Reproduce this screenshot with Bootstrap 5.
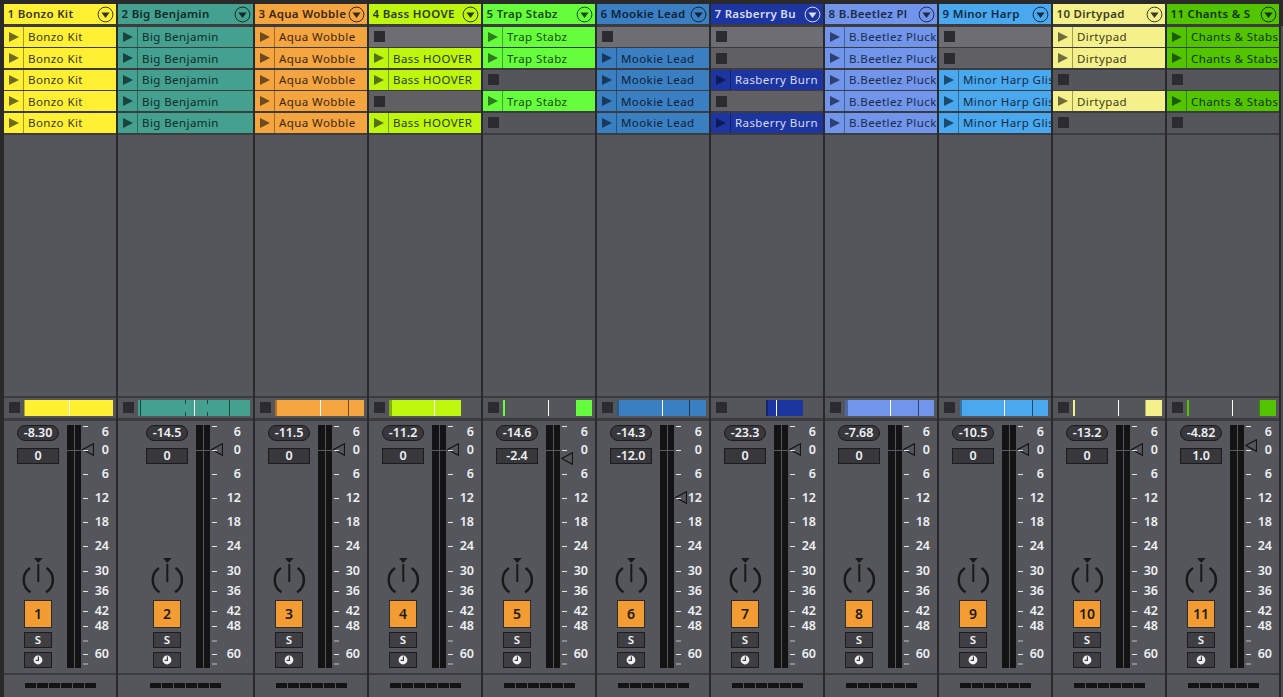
<!DOCTYPE html>
<html lang="en">
<head>
  <meta charset="UTF-8">
  <title>Session mixer</title>
  <meta name="viewport" content="width=device-width, initial-scale=1">
  <link href="https://cdn.jsdelivr.net/npm/bootstrap@5.3.0/dist/css/bootstrap.min.css" rel="stylesheet">
  <style>
    html, body { height: 100%; overflow: hidden; background: #2a2a2b; }
    body { font-family: "Noto Sans", sans-serif; }
    .mixer { height: 697px; padding: 4px 0 0 4px; gap: 2px; background: #2a2a2b; }
    .strip { width: 112px; flex: none; background: #3c3c3f; }
    .strip.wide { width: 135px; }
    .edge-strip { flex: 1; margin-top: 22px; background: #4f5055; }
    .strip-head { height: 20px; padding: 0 2px 0 3.5px; font-size: 11.5px; font-weight: 600; letter-spacing: .3px; white-space: nowrap; overflow: hidden; margin-bottom: 2.7px; }
    .strip-head span { flex: 1; overflow: hidden; }
    .slot { height: 20.2px; margin-bottom: 1.3px; overflow: hidden; white-space: nowrap; font-size: 11.5px; letter-spacing: .42px; }
    .slot-play { width: 20px; flex: none; height: 100%; border-right: 1px solid rgba(0,0,0,.35); }
    .slot-name { padding-left: 4px; }
    .slot-empty { background: #55565b; padding-left: 5px; }
    .slot-empty.row0 { background: #6e6d74; }
    .slot-empty.row1, .slot-empty.row3 { background: #5f5f64; }
    .stop-sq { width: 11px; height: 11px; background: #2c2c30; display: block; flex: none; }
    .clip-gap { height: 261px; background: #55565b; margin: .8px 0 2px; }
    .status { height: 20px; background: #55565b; padding-left: 5px; margin-bottom: 3px; }
    .clip-track { position: relative; width: 89px; height: 16px; margin-left: 4px; }
    .clip-track i { position: absolute; top: 0; height: 16px; display: block; }
    .clip-track i.gapped { background: linear-gradient(rgba(0,0,0,.55) 0 4px, transparent 4px 12px, rgba(0,0,0,.55) 12px) !important; }
    .wide .clip-track { width: 112px; }
    .controls { height: 252px; background: #55565b; margin-bottom: 2px; }
    .ctl { width: 63px; padding: 4px 0 5px 13px; flex: none; }
    .wide .ctl { width: 78px; padding-left: 28px; }
    .readout { width: 42px; height: 16px; background: #38383c; border: 1px solid #1c1c1e; color: #eef0f4; font-size: 12.5px; font-weight: 600; line-height: 14px; text-align: center; letter-spacing: -.1px; }
    .readout.oval { border-radius: 8px; margin-bottom: 7px; }
    .knob { display: block; width: 32px; height: 37px; margin: auto 0 5px 5px; }
    .track-btn { width: 28px; height: 28px; margin: 0 7px 4px; background: #f39c33; border: 1px solid #2c2c2c; color: #221a10; font-size: 14px; font-weight: 600; }
    .mini-btn { width: 28px; height: 16px; margin: 0 7px; background: #3f3f43; border: 1px solid #1c1c1e; color: #eef0f4; font-size: 11.5px; font-weight: 600; }
    .mini-btn + .mini-btn { margin-top: 4px; }
    .meter { width: 14px; height: 243px; flex: none; margin-top: 4px; gap: 1px; position: relative; }
    .meter b { flex: 1; background: #131314; display: block; }
    .meter u { position: absolute; left: 0; right: 0; top: 25px; height: 1px; background: #5b5b5f; }
    .scale { position: relative; flex: none; width: 28px; height: 243px; margin-top: 4px; color: #eef0f4; font-size: 12.5px; font-weight: 600; }
    .wide .scale { width: 31px; }
    .scale i { position: absolute; left: 2px; width: 5px; height: 1.5px; background: #e4e5e8; display: block; }
    .scale i.dim { background: #8c8c90; }
    .scale span { position: absolute; right: 0; line-height: 14px; }
    .volume { position: absolute; width: 12px; height: 13px; display: block; }
    .foot { flex: 1; background: #55565b; }
    .dash { gap: 1px; }
    .dash i { width: 11px; height: 5px; background: #131314; display: block; }
  </style>
</head>
<body>
  <div class="mixer d-flex" id="mixer"></div>
  <script src="https://cdn.jsdelivr.net/npm/bootstrap@5.3.0/dist/js/bootstrap.bundle.min.js"></script>
  <script>
    // slots: 1 = clip, 0 = empty. bars: [left, width, colour, gapped?] relative to the clip track
    const DK = "rgba(0,0,0,.55)", SH = "rgba(0,0,0,.3)", W = "#fff";
    const tracks = [
      { n: "1 Bonzo Kit", clip: "Bonzo Kit", bg: "#fff034", fg: "#38361a", tri: "#6f6a22", slots: [1,1,1,1,1], db: "-8.30", off: "0", vol: 450, bars: [[0,89,"#fff034"],[0,1,SH],[45,1,W]] },
      { n: "2 Big Benjamin", clip: "Big Benjamin", bg: "#44a08f", fg: "#0f2b28", tri: "#17453e", slots: [1,1,1,1,1], db: "-14.5", off: "0", vol: 450, wide: true, bars: [[0,112,"#44a08f"],[2,1,DK],[46.5,1,DK,1],[56,1,W],[69,1,DK,1],[90.5,1,DK]] },
      { n: "3 Aqua Wobble", clip: "Aqua Wobble", bg: "#f5a53f", fg: "#3a2710", tri: "#6e4a1e", slots: [1,1,1,1,1], db: "-11.5", off: "0", vol: 450, bars: [[0,89,"#f5a53f"],[0,2,SH],[45,1,W],[72.5,1,DK]] },
      { n: "4 Bass HOOVE", clip: "Bass HOOVER", bg: "#bef60e", fg: "#2c3a08", tri: "#54700f", slots: [0,1,1,0,1], db: "-11.2", off: "0", vol: 450, bars: [[0,72,"#bef60e"],[0,2.5,SH],[45,1,W]] },
      { n: "5 Trap Stabz", clip: "Trap Stabz", bg: "#66fe3c", fg: "#1b4a10", tri: "#2e7a1c", slots: [1,1,0,1,0], db: "-14.6", off: "-2.4", vol: 459, bars: [[0,1.5,"#66fe3c"],[45,1,W],[72.5,1,SH],[73,16,"#66fe3c"]] },
      { n: "6 Mookie Lead", clip: "Mookie Lead", bg: "#3a7fc2", fg: "#0d2239", tri: "#16395c", slots: [0,1,1,1,1], db: "-14.3", off: "-12.0", vol: 498, bars: [[0,89,"#3a7fc2"],[0,2,SH],[45,1,W],[72,1,DK]] },
      { n: "7 Rasberry Bu", clip: "Rasberry Burn", bg: "#1d35a0", fg: "#d7dcf4", tri: "#0d1a55", slots: [0,0,1,0,1], db: "-23.3", off: "0", vol: 450, bars: [[35,37,"#1d35a0"],[35,2,SH],[45,1,W]] },
      { n: "8 B.Beetlez Pl", clip: "B.Beetlez Pluck", bg: "#7095eb", fg: "#1e2a4a", tri: "#2f4070", slots: [1,1,1,1,1], db: "-7.68", off: "0", vol: 450, bars: [[0,89,"#7095eb"],[0,2.5,SH],[45,1,W],[72.5,1,DK]] },
      { n: "9 Minor Harp", clip: "Minor Harp Glis", bg: "#4aa8ef", fg: "#0f2c44", tri: "#1a4a70", slots: [0,0,1,1,1], db: "-10.5", off: "0", vol: 450, bars: [[1,88,"#4aa8ef"],[1,2,SH],[45,1,W],[72.5,1,DK]] },
      { n: "10 Dirtypad", clip: "Dirtypad", bg: "#f5f18a", fg: "#3c3b22", tri: "#6e6c3a", slots: [1,1,0,1,0], db: "-13.2", off: "0", vol: 450, bars: [[0,1.5,"#f5f18a"],[45,1,W],[72,17,"#f5f18a"],[72,1,SH]] },
      { n: "11 Chants & S", clip: "Chants & Stabs", bg: "#52c400", fg: "#143200", tri: "#1f5a00", slots: [1,1,0,1,0], db: "-4.82", off: "1.0", vol: 446, bars: [[0,1.5,"#52c400"],[45,1,W],[72,17,"#52c400"],[72,1,SH]] }
    ];

    // y is measured from the top of the meter (425)
    const ticks = [[1],[25],[49],[73],[97],[121],[146],[166],[186],[201],[215.5,1],[229],[238.5,1]];
    const labels = [["6",7],["0",25],["6",49],["12",73],["18",97],["24",121],["30",146],["36",166],["42",186],["48",201],["60",229]];

    function playIcon(c) {
      return `<svg width="10" height="10" viewBox="0 0 10 10" class="d-block"><path d="M0 0L10 5L0 10Z" fill="${c}"/></svg>`;
    }
    function headBtn(c) {
      return `<svg width="17" height="17" viewBox="0 0 17 17" class="flex-shrink-0"><circle cx="8.5" cy="8.5" r="7.4" fill="none" stroke="${c}" stroke-width="1"/><path d="M4.4 6.4H12.6L8.5 12Z" fill="${c}"/></svg>`;
    }
    const knob = `<svg class="knob" viewBox="0 0 32 37"><path d="M8 10A14.6 14.6 0 0 0 8.5 34.3M24.6 10A14.6 14.6 0 0 1 24.1 34.3" fill="none" stroke="#19191a" stroke-width="2.5"/><path d="M12 0H20.7L16.3 5Z" fill="#19191a"/><rect x="15.3" y="6" width="2" height="18" fill="#19191a"/></svg>`;
    const clock = `<svg width="10" height="10" viewBox="0 0 10 10"><circle cx="5" cy="5" r="4.4" fill="#f0f1f3"/><path d="M5.4 1.6V5.4H2.6" fill="none" stroke="#3f3f43" stroke-width="1.2"/></svg>`;

    document.getElementById("mixer").innerHTML = tracks.map((t, i) => {
      const slots = t.slots.map((on, r) => on
        ? `<div class="slot d-flex align-items-center" style="background:${t.bg};color:${t.fg}"><div class="slot-play d-flex align-items-center justify-content-center">${playIcon(t.tri)}</div><div class="slot-name">${t.clip}</div></div>`
        : `<div class="slot slot-empty row${r} d-flex align-items-center"><span class="stop-sq"></span></div>`).join("");
      const bars = t.bars.map(b => `<i class="${b[3] ? "gapped" : ""}" style="left:${b[0]}px;width:${b[1]}px;background:${b[2]}"></i>`).join("");
      const scale = ticks.map(k => `<i class="${k[1] ? "dim" : ""}" style="top:${k[0]}px"></i>`).join("")
        + labels.map(l => `<span style="top:${l[1] - 7}px">${l[0]}</span>`).join("");
      const dash = "<i></i>".repeat(6);
      return `<section class="strip ${t.wide ? "wide" : ""} d-flex flex-column">
        <div class="strip-head d-flex align-items-center" style="background:${t.bg};color:${t.fg}"><span>${t.n}</span>${headBtn(t.fg)}</div>
        ${slots}
        <div class="clip-gap"></div>
        <div class="status d-flex align-items-center"><span class="stop-sq"></span><div class="clip-track">${bars}</div></div>
        <div class="controls d-flex">
          <div class="ctl d-flex flex-column">
            <div class="readout oval">${t.db}</div>
            <div class="readout">${t.off}</div>
            ${knob}
            <div class="track-btn d-flex align-items-center justify-content-center">${i + 1}</div>
            <div class="mini-btn d-flex align-items-center justify-content-center">S</div>
            <div class="mini-btn d-flex align-items-center justify-content-center">${clock}</div>
          </div>
          <div class="meter d-flex"><b></b><b></b><u></u>
            <svg class="volume" style="left:15px;top:${t.vol - 425 - 6.5}px" viewBox="0 0 12 13"><path d="M11.5 .7V12.3L.8 6.5Z" fill="#55565b" stroke="#141415" stroke-width="1.2"/></svg>
          </div>
          <div class="scale">${scale}</div>
        </div>
        <div class="foot d-flex align-items-center justify-content-center"><div class="dash d-flex">${dash}</div></div>
      </section>`;
    }).join("") + `<div class="edge-strip"></div>`;
  </script>
</body>
</html>
